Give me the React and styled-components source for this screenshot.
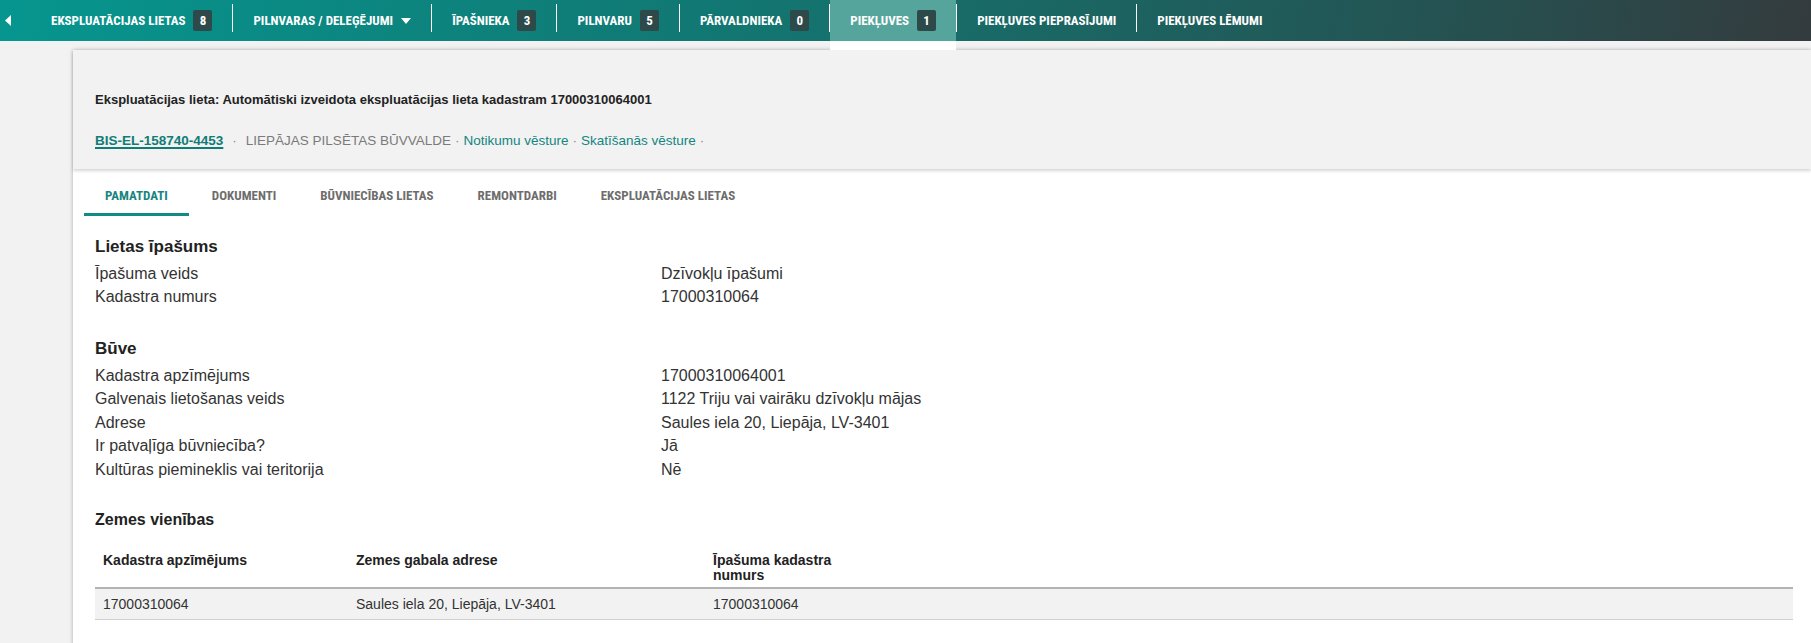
import React from "react";
import styled, { createGlobalStyle } from "styled-components";

const navItems = [
  { label: "Ekspluatācijas lietas", count: 8 },
  { label: "Pilnvaras / deleģējumi", dropdown: true },
  { label: "Īpašnieka", count: 3 },
  { label: "Pilnvaru", count: 5 },
  { label: "Pārvaldnieka", count: 0 },
  { label: "Piekļuves", count: 1, active: true },
  { label: "Piekļuves pieprasījumi" },
  { label: "Piekļuves lēmumi" },
];

const tabs = [
  "Pamatdati",
  "Dokumenti",
  "Būvniecības lietas",
  "Remontdarbi",
  "Ekspluatācijas lietas",
];

const propertyFields = [
  ["Īpašuma veids", "Dzīvokļu īpašumi"],
  ["Kadastra numurs", "17000310064"],
];

const buildingFields = [
  ["Kadastra apzīmējums", "17000310064001"],
  ["Galvenais lietošanas veids", "1122 Triju vai vairāku dzīvokļu mājas"],
  ["Adrese", "Saules iela 20, Liepāja, LV-3401"],
  ["Ir patvaļīga būvniecība?", "Jā"],
  ["Kultūras piemineklis vai teritorija", "Nē"],
];

const condensed = `"Liberation Sans Narrow", "Roboto Condensed", "DejaVu Sans Condensed", "Liberation Sans", sans-serif`;

function App() {
  return (
    <>
      <GlobalStyle />
      <TopNav>
        <BackButton aria-label="Atpakaļ">
          <svg width="8" height="11" viewBox="0 0 8 11">
            <polygon points="7,0 7,11 1,5.5" fill="#fff" />
          </svg>
        </BackButton>
        {navItems.map((item, i) => (
          <React.Fragment key={item.label}>
            {i > 0 && <NavDivider />}
            <NavItem $active={item.active}>
              {item.label}
              {item.dropdown && (
                <svg width="10" height="6" viewBox="0 0 10 6">
                  <polygon points="0,0 10,0 5,6" fill="#fff" />
                </svg>
              )}
              {item.count !== undefined && <Badge>{item.count}</Badge>}
            </NavItem>
          </React.Fragment>
        ))}
      </TopNav>

      <Card>
        <CardHeader>
          <Title>
            Ekspluatācijas lieta: Automātiski izveidota ekspluatācijas lieta
            kadastram 17000310064001
          </Title>
          <MetaLine>
            <CaseLink href="#">BIS-EL-158740-4453</CaseLink>
            <Dot $wide>·</Dot>
            LIEPĀJAS PILSĒTAS BŪVVALDE
            <Dot>·</Dot>
            <MetaLink href="#">Notikumu vēsture</MetaLink>
            <Dot>·</Dot>
            <MetaLink href="#">Skatīšanās vēsture</MetaLink>
            <Dot>·</Dot>
          </MetaLine>
        </CardHeader>

        <TabBar>
          {tabs.map((t, i) => (
            <Tab key={t} $active={i === 0}>
              {t}
            </Tab>
          ))}
        </TabBar>

        <Content>
          <SectionTitle>Lietas īpašums</SectionTitle>
          {propertyFields.map(([label, value]) => (
            <FieldRow key={label}>
              <span>{label}</span>
              <span>{value}</span>
            </FieldRow>
          ))}

          <SectionTitle $gap={28}>Būve</SectionTitle>
          {buildingFields.map(([label, value]) => (
            <FieldRow key={label}>
              <span>{label}</span>
              <span>{value}</span>
            </FieldRow>
          ))}

          <SubTitle>Zemes vienības</SubTitle>
          <LandTable>
            <colgroup>
              <col style={{ width: 253 }} />
              <col style={{ width: 357 }} />
              <col style={{ width: 150 }} />
              <col />
            </colgroup>
            <thead>
              <tr>
                <th>Kadastra apzīmējums</th>
                <th>Zemes gabala adrese</th>
                <th>Īpašuma kadastra numurs</th>
                <th />
              </tr>
            </thead>
            <tbody>
              <tr>
                <td>17000310064</td>
                <td>Saules iela 20, Liepāja, LV-3401</td>
                <td>17000310064</td>
                <td />
              </tr>
            </tbody>
          </LandTable>
        </Content>
      </Card>
    </>
  );
}

export default App;

const GlobalStyle = createGlobalStyle`
  html, body {
    margin: 0;
    padding: 0;
    background: #f2f2f2;
    font-family: "Liberation Sans", Arial, sans-serif;
    overflow: hidden;
  }
`;

const TopNav = styled.nav`
  display: flex;
  align-items: stretch;
  height: 41px;
  position: relative;
  z-index: 2;
  background: linear-gradient(
    100deg,
    #06968f 0%,
    #127772 40%,
    #225756 75%,
    #343b3e 100%
  );
`;

const BackButton = styled.button`
  width: 31px;
  padding: 0 0 0 4px;
  border: 0;
  background: transparent;
  display: flex;
  align-items: center;
  cursor: pointer;
`;

const NavItem = styled.a`
  position: relative;
  display: flex;
  align-items: center;
  gap: 8px;
  padding: 0 20px;
  color: #fff;
  font-family: ${condensed};
  font-weight: 700;
  font-size: 13px;
  text-transform: uppercase;
  white-space: nowrap;
  background: ${(p) => (p.$active ? "#55a59d" : "transparent")};

  &::after {
    content: "";
    display: ${(p) => (p.$active ? "block" : "none")};
    position: absolute;
    left: 0;
    right: 0;
    top: 100%;
    height: 9px;
    background: #fff;
  }
`;

const NavDivider = styled.span`
  width: 1px;
  height: 28px;
  margin-top: 4px;
  background: #fff;
`;

const Badge = styled.span`
  min-width: 19px;
  height: 21px;
  border-radius: 2px;
  background: #2d4949;
  display: flex;
  align-items: center;
  justify-content: center;
  font-size: 13px;
`;

const Card = styled.main`
  margin: 9px 0 0 73px;
  background: #fff;
  min-height: 700px;
  box-shadow: 0 0 4px rgba(0, 0, 0, 0.28);
`;

const CardHeader = styled.header`
  position: relative;
  z-index: 1;
  background: #f2f2f2;
  padding: 41px 22px 19px;
  box-shadow: 0 2px 3px rgba(0, 0, 0, 0.16);
`;

const Title = styled.h1`
  margin: 0;
  font-size: 13px;
  line-height: 18px;
  font-weight: 700;
  color: #222;
`;

const MetaLine = styled.div`
  margin-top: 23px;
  font-size: 13.5px;
  line-height: 18px;
  color: #7a7a7a;
`;

const CaseLink = styled.a`
  color: #0f7c76;
  font-weight: 700;
  text-decoration: underline;
  text-decoration-thickness: 2px;
  text-underline-offset: 2px;
`;

const MetaLink = styled.a`
  color: #13857f;
  text-decoration: none;
`;

const Dot = styled.span`
  margin: ${(p) => (p.$wide ? "0 9px" : "0 4px")};
  color: #8a8a8a;
`;

const TabBar = styled.div`
  display: flex;
  gap: 2px;
  padding-left: 11px;
`;

const Tab = styled.a`
  padding: 20px 21px 10px;
  font-family: ${condensed};
  font-weight: 700;
  font-size: 13px;
  line-height: 14px;
  text-transform: uppercase;
  color: ${(p) => (p.$active ? "#17847f" : "#6d6d6d")};
  border-bottom: 3px solid ${(p) => (p.$active ? "#128b85" : "transparent")};
`;

const Content = styled.section`
  padding: 18.5px 18px 40px 22px;
  color: #333;
`;

const SectionTitle = styled.h2`
  margin: ${(p) => p.$gap || 0}px 0 3px;
  font-size: 17px;
  line-height: 24px;
  font-weight: 700;
  color: #222;
`;

const FieldRow = styled.div`
  display: grid;
  grid-template-columns: 566px 1fr;
  font-size: 16px;
  line-height: 23.5px;
`;

const SubTitle = styled.h3`
  margin: 28px 0 14px;
  font-size: 16px;
  line-height: 22px;
  font-weight: 700;
  color: #222;
`;

const LandTable = styled.table`
  width: 100%;
  border-collapse: collapse;
  table-layout: fixed;
  font-size: 14px;
  color: #222;

  th {
    text-align: left;
    vertical-align: top;
    font-weight: 700;
    line-height: 15px;
    padding: 8px 8px 4px;
    border-bottom: 2px solid #b3b3b3;
  }

  td {
    height: 30px;
    padding: 0 8px;
    background: #f2f2f2;
    border-bottom: 1px solid #cfcfcf;
    color: #333;
  }
`;
